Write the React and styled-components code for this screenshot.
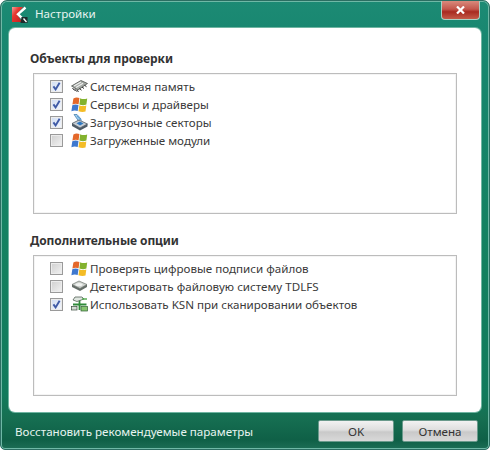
import React from "react";
import styled, { createGlobalStyle } from "styled-components";

const Global = createGlobalStyle`
  html, body { margin: 0; padding: 0; }
  body { width: 490px; height: 450px; overflow: hidden; background: #fff; }
`;

const Window = styled.div`
  width: 490px;
  height: 450px;
  box-sizing: border-box;
  display: flex;
  flex-direction: column;
  font-family: "Noto Sans", "Liberation Sans", sans-serif;
  background: linear-gradient(180deg, #1c8a74 0%, #188770 8%, #13805f 60%, #117a5c 88%, #166f52 93%, #0f6047 98%, #1c6d55 100%);
  border: 1px solid #2b6e62;
  border-radius: 7px 7px 5px 5px;
  padding: 0 8px;
  box-shadow: inset 0 0 0 1px #6fb8a6;
`;

const TitleBar = styled.header`
  height: 27px;
  flex: none;
  display: flex;
  align-items: center;
  position: relative;
  padding-left: 2px;
`;

const TitleText = styled.span`
  margin-left: 6px;
  margin-top: -2px;
  color: #e6f4f0;
  font-size: 11.6px;
`;

const CloseButton = styled.div`
  position: absolute;
  top: 0;
  right: 1px;
  width: 39px;
  height: 19px;
  border-radius: 0 0 4px 4px;
  border: 1px solid #a8d0c4;
  border-top: none;
  box-sizing: border-box;
  background: linear-gradient(180deg, #d98a7c 0%, #c4574c 45%, #a82a20 60%, #c45a48 100%);
  display: flex;
  align-items: center;
  justify-content: center;
`;

const Panel = styled.main`
  flex: 1;
  background: #fff;
  border-radius: 6px;
  box-shadow: 0 0 0 1px #6fb5a2;
  padding: 22px 24px 16px 21px;
  display: flex;
  flex-direction: column;
  gap: 18px;
`;

const Section = styled.section`
  display: flex;
  flex-direction: column;
  gap: 5px;
`;

const Heading = styled.h2`
  margin: 0;
  font-size: 12px;
  line-height: 18px;
  font-weight: 700;
  letter-spacing: -0.08px;
  color: #333;
`;

const ListBox = styled.div`
  margin-left: 3px;
  height: 141px;
  box-sizing: border-box;
  border: 1px solid #bcbcbc;
  box-shadow: inset 0 0 0 1px #f4f4f4;
  padding: 3px 0 0 16px;
`;

const Row = styled.div`
  height: 18px;
  display: flex;
  align-items: center;
  color: #3a3a3a;
  font-size: 11.6px;
`;

const Check = styled.span`
  width: 13px;
  height: 13px;
  box-sizing: border-box;
  flex: none;
  border: 1px solid #9a9a9a;
  background: ${(p) => (p.$on ? "linear-gradient(135deg,#cfdcf2,#f6f8fd)" : "linear-gradient(135deg,#cfcfcf,#f2f2f2)")};
  box-shadow: inset 0 0 0 1px #ececec;
  display: flex;
  align-items: center;
  justify-content: center;
`;

const IconSlot = styled.span`
  width: 17px;
  height: 17px;
  margin: 0 2px 0 8px;
  flex: none;
  display: flex;
`;

const Footer = styled.footer`
  height: 37px;
  box-sizing: border-box;
  padding: 1px 3px 0 6px;
  flex: none;
  display: flex;
  align-items: center;
  justify-content: space-between;
`;

const FooterLink = styled.span`
  color: #e8f4f0;
  font-size: 11.6px;
`;

const Buttons = styled.div`
  display: flex;
  gap: 8px;
`;

const Button = styled.button`
  width: 76px;
  height: 22px;
  padding: 0;
  border: 1px solid #6a9a8c;
  border-radius: 2px;
  font: inherit;
  font-size: 11.6px;
  color: #333;
  background: linear-gradient(180deg, #f2f2f2 0%, #dedede 45%, #c9c9c9 55%, #d9d9d9 100%);
`;

const Tick = () => (
  <svg width="9" height="9" viewBox="0 0 9 9">
    <path d="M1.4 4.4 L3.6 7.4 L7.6 0.8" fill="none" stroke="#3f5aa6" strokeWidth="1.9" />
  </svg>
);

const KasperskyLogo = () => (
  <svg width="18" height="18" viewBox="0 0 18 18">
    <defs>
      <linearGradient id="kred" x1="0" y1="0" x2="1" y2="1">
        <stop offset="0" stopColor="#f4a09a" />
        <stop offset="0.35" stopColor="#e63a32" />
        <stop offset="1" stopColor="#c41a1a" />
      </linearGradient>
    </defs>
    <path d="M1 1 H12 L6 8 L11 16 H1 Z" fill="url(#kred)" />
    <path d="M14.5 1.5 L7 8.2 L13.5 14.5" fill="none" stroke="#fff" strokeWidth="2.4" />
    <path d="M10.5 11 L16.5 11 L16.5 17 L9.5 17 Z" fill="#1c2c2c" />
    <path d="M12.5 12.5 L15.5 16" stroke="#fff" strokeWidth="1.3" />
  </svg>
);

const Chip = () => (
  <svg width="17" height="17" viewBox="0 0 17 17">
    <path d="M0.5 8 L10 2.5 L16.5 5.5 L7 12 Z" fill="#a6aba6" stroke="#3c3f3c" strokeWidth="0.7" />
    <path d="M3 8 L10 4 M5 9.5 L12 5.2" stroke="#efefef" strokeWidth="1.1" />
    <path d="M1.5 10 L3.5 12.5 M3.5 10.8 L5.5 13.5 M5.7 11.8 L7.5 14 M8.5 10.5 L10.5 12.2 M11 9 L13 10.5 M13.5 7.2 L15.5 8.7" stroke="#2a2a2a" strokeWidth="1" />
  </svg>
);

const Flag = () => (
  <svg width="17" height="17" viewBox="0 0 17 17">
    <path d="M2.4 2.4 Q5.4 0.6 8.4 2 L7.6 8.2 Q4.6 7 1.4 8.4 Z" fill="#e4682a" />
    <path d="M9.2 2.2 Q12.4 3.8 16.2 2.4 L15.4 8.6 Q11.6 9.8 8.4 8.4 Z" fill="#83b22e" />
    <path d="M1.3 9.2 Q4.4 7.8 7.5 9 L6.7 15 Q3.6 13.8 0.4 15.2 Z" fill="#3e78cf" />
    <path d="M8.3 9.2 Q11.6 10.8 15.3 9.4 L14.5 15.6 Q11 16.6 7.5 15.2 Z" fill="#f4bc26" />
  </svg>
);

const BootDrive = () => (
  <svg width="17" height="17" viewBox="0 0 17 17">
    <path d="M3 0.5 L6 0.5 L10 5 L7.5 7 Z" fill="#9ccbee" stroke="#3e78a8" strokeWidth="0.7" />
    <path d="M6 2 L11 6.5" stroke="#5da2d8" strokeWidth="1" />
    <path d="M1 9.5 L8 6 L16.5 10 L9 14 Z" fill="#c7ced4" stroke="#3c4650" strokeWidth="0.7" />
    <path d="M1 9.5 L1 12 L9 16.5 L16.5 12.5 L16.5 10 L9 14 Z" fill="#4e5a64" />
    <path d="M5.5 9.2 L9 7.6 L12.5 9.6 L9 11.4 Z" fill="#2f78c0" />
  </svg>
);

const Hdd = () => (
  <svg width="17" height="17" viewBox="0 0 17 17">
    <path d="M1 6.5 L8 3 L16 6.5 L9 10.5 Z" fill="#cdd1cd" stroke="#5e6660" strokeWidth="0.6" />
    <path d="M1 6.5 L1 9 L9 13 L16 9 L16 6.5 L9 10.5 Z" fill="#656d68" />
    <ellipse cx="8" cy="6.5" rx="3.6" ry="1.6" fill="#f0f2f0" />
  </svg>
);

const Network = () => (
  <svg width="17" height="17" viewBox="0 0 17 17">
    <path d="M2 8.5 H15.5 M8.5 4 V14" stroke="#2f8a3a" strokeWidth="1.8" />
    <path d="M4 1 L11 1 L13 3 L6 5.5 L2 4 Z" fill="#dfe6e0" stroke="#3f4f42" strokeWidth="0.7" />
    <path d="M11 3 H16" stroke="#4fa84a" strokeWidth="1.4" />
    <rect x="0.5" y="10.5" width="5.5" height="3.5" fill="#d4dcd5" stroke="#3a4a3c" strokeWidth="0.7" />
    <rect x="10" y="10.5" width="6.5" height="4.5" fill="#86c470" stroke="#2f5f33" strokeWidth="0.7" />
  </svg>
);

const Item = ({ on, icon, children }) => (
  <Row>
    <Check $on={on}>{on && <Tick />}</Check>
    <IconSlot>{icon}</IconSlot>
    <span>{children}</span>
  </Row>
);

export default function App() {
  return (
    <Window>
      <Global />
      <TitleBar>
        <KasperskyLogo />
        <TitleText>Настройки</TitleText>
        <CloseButton>
          <svg width="9" height="8" viewBox="0 0 9 8">
            <path d="M1 0.5 L8 7.5 M8 0.5 L1 7.5" stroke="#fff" strokeWidth="2.2" />
          </svg>
        </CloseButton>
      </TitleBar>
      <Panel>
        <Section>
          <Heading>Объекты для проверки</Heading>
          <ListBox>
            <Item on icon={<Chip />}>Системная память</Item>
            <Item on icon={<Flag />}>Сервисы и драйверы</Item>
            <Item on icon={<BootDrive />}>Загрузочные секторы</Item>
            <Item icon={<Flag />}>Загруженные модули</Item>
          </ListBox>
        </Section>
        <Section>
          <Heading>Дополнительные опции</Heading>
          <ListBox>
            <Item icon={<Flag />}>Проверять цифровые подписи файлов</Item>
            <Item icon={<Hdd />}>Детектировать файловую систему TDLFS</Item>
            <Item on icon={<Network />}>Использовать KSN при сканировании объектов</Item>
          </ListBox>
        </Section>
      </Panel>
      <Footer>
        <FooterLink>Восстановить рекомендуемые параметры</FooterLink>
        <Buttons>
          <Button>OK</Button>
          <Button>Отмена</Button>
        </Buttons>
      </Footer>
    </Window>
  );
}
